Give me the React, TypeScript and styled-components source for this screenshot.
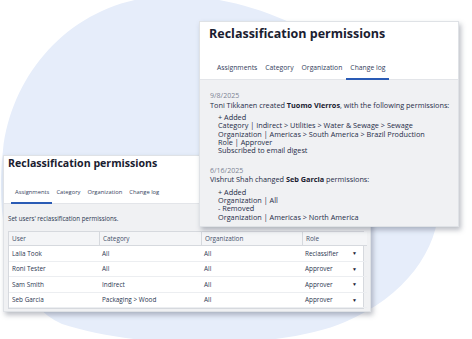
import React from "react";
import styled, { createGlobalStyle } from "styled-components";

const Global = createGlobalStyle`
  html, body { margin: 0; padding: 0; background: #ffffff; }
  body { font-family: "Open Sans", "Liberation Sans", sans-serif; }
  * { box-sizing: border-box; }
`;

const Stage = styled.div`
  position: relative;
  width: 472px;
  height: 339px;
  overflow: hidden;
  background: #ffffff;
`;

const Blob = styled.svg`
  position: absolute;
  left: 0;
  top: 0;
`;

const Card = styled.div<{ $x: number; $y: number; $w: number; $h: number }>`
  position: absolute;
  left: ${(p) => p.$x}px;
  top: ${(p) => p.$y}px;
  width: ${(p) => p.$w}px;
  height: ${(p) => p.$h}px;
  display: flex;
  flex-direction: column;
  background: #f0f1f3;
  border: 1px solid #dfe2e6;
  box-shadow: 2px 3px 5px rgba(60, 70, 90, 0.35);
`;

const Header = styled.div<{ $h: number; $pad: number }>`
  height: ${(p) => p.$h}px;
  flex: none;
  background: #ffffff;
  display: flex;
  flex-direction: column;
  padding-left: ${(p) => p.$pad}px;
  border-bottom: 1px solid #e3e5e9;
`;

const Title = styled.h1<{ $size: number; $top: number }>`
  margin: ${(p) => p.$top}px 0 0 0;
  font-size: ${(p) => p.$size}px;
  line-height: 1.2;
  font-weight: 700;
  color: #1a2030;
  white-space: nowrap;
`;

const Tabs = styled.div<{ $gap: number; $pad: number }>`
  margin-top: auto;
  display: flex;
  gap: ${(p) => p.$gap}px;
  padding-left: ${(p) => p.$pad}px;
`;

const Tab = styled.div<{ $size: number; $active?: boolean; $h: number }>`
  position: relative;
  font-size: ${(p) => p.$size}px;
  line-height: 1.35;
  color: #34415c;
  height: ${(p) => p.$h}px;
  display: flex;
  align-items: flex-start;
  white-space: nowrap;
  &::after {
    content: "";
    display: ${(p) => (p.$active ? "block" : "none")};
    position: absolute;
    left: -4px;
    right: -3px;
    bottom: -1px;
    height: 2px;
    background: #2a5bb5;
  }
`;

const LogBody = styled.div`
  padding: 12px 10px 0 10px;
  display: flex;
  flex-direction: column;
  gap: 12px;
  font-size: 7.3px;
  line-height: 8.3px;
  color: #1f2c48;
`;

const Entry = styled.div`
  display: flex;
  flex-direction: column;
`;

const DateLine = styled.div`
  color: #7d8494;
  font-size: 7px;
  margin-bottom: 0.5px;
`;

const Summary = styled.div`
  white-space: nowrap;
  margin-bottom: 4px;
  b { font-weight: 700; color: #1a2030; }
`;

const Change = styled.div`
  padding-left: 8px;
  white-space: nowrap;
`;

const AssignBody = styled.div`
  padding: 10px 6px 0 4px;
  display: flex;
  flex-direction: column;
  gap: 8px;
`;

const Intro = styled.div`
  font-size: 6.2px;
  color: #2a3650;
`;

const Table = styled.div`
  display: grid;
  grid-template-columns: 90px 102px 101px 65px;
  background: #ffffff;
  border: 1px solid #d6d9de;
  font-size: 6.4px;
  color: #2a3650;
`;

const HeadCell = styled.div`
  height: 14px;
  display: flex;
  align-items: center;
  padding-left: 3px;
  background: #f4f5f7;
  color: #44506a;
  border-left: 1px solid #d6d9de;
  border-bottom: 1px solid #d6d9de;
  &:first-child { border-left: none; }
`;

const Cell = styled.div`
  height: 15.5px;
  display: flex;
  align-items: center;
  justify-content: space-between;
  padding: 0 10px 0 3px;
  border-bottom: 1px solid #eceef1;
  white-space: nowrap;
`;

const Caret = styled.span`
  font-size: 5px;
  color: #1a2030;
`;

const rows = [
  ["Lalia Took", "All", "All", "Reclassifier"],
  ["Roni Tester", "All", "All", "Approver"],
  ["Sam Smith", "Indirect", "All", "Approver"],
  ["Seb Garcia", "Packaging > Wood", "All", "Approver"],
];

export default function App() {
  return (
    <Stage>
      <Global />
      <Blob width="472" height="339" viewBox="0 0 472 339">
        <path
          d="M 165 -4 C 270 -8 390 60 432 165 C 455 225 420 290 345 322 C 285 348 150 352 62 324 C 15 303 -6 230 3 150 C 12 70 75 0 165 -4 Z"
          fill="#e6edfa"
        />
      </Blob>

      <Card $x={3} $y={155} $w={368} $h={157}>
        <Header $h={48} $pad={4}>
          <Title $size={10.6} $top={1}>Reclassification permissions</Title>
          <Tabs $gap={7} $pad={7}>
            <Tab $size={5.8} $h={14} $active>Assignments</Tab>
            <Tab $size={5.8} $h={14}>Category</Tab>
            <Tab $size={5.8} $h={14}>Organization</Tab>
            <Tab $size={5.8} $h={14}>Change log</Tab>
          </Tabs>
        </Header>
        <AssignBody>
          <Intro>Set users' reclassification permissions.</Intro>
          <Table>
            <HeadCell>User</HeadCell>
            <HeadCell>Category</HeadCell>
            <HeadCell>Organization</HeadCell>
            <HeadCell>Role</HeadCell>
            {rows.map((r) => (
              <React.Fragment key={r[0]}>
                <Cell>{r[0]}</Cell>
                <Cell>{r[1]}</Cell>
                <Cell>{r[2]}</Cell>
                <Cell>
                  {r[3]}
                  <Caret>▼</Caret>
                </Cell>
              </React.Fragment>
            ))}
          </Table>
        </AssignBody>
      </Card>

      <Card $x={199} $y={21} $w={260} $h={206}>
        <Header $h={58} $pad={9}>
          <Title $size={12.5} $top={4}>Reclassification permissions</Title>
          <Tabs $gap={8} $pad={8}>
            <Tab $size={6.8} $h={16}>Assignments</Tab>
            <Tab $size={6.8} $h={16}>Category</Tab>
            <Tab $size={6.8} $h={16}>Organization</Tab>
            <Tab $size={6.8} $h={16} $active>Change log</Tab>
          </Tabs>
        </Header>
        <LogBody>
          <Entry>
            <DateLine>9/8/2025</DateLine>
            <Summary>
              Toni Tikkanen created <b>Tuomo Vierros</b>, with the following permissions:
            </Summary>
            <Change>+ Added</Change>
            <Change>Category | Indirect &gt; Utilities &gt; Water &amp; Sewage &gt; Sewage</Change>
            <Change>Organization | Americas &gt; South America &gt; Brazil Production</Change>
            <Change>Role | Approver</Change>
            <Change>Subscribed to email digest</Change>
          </Entry>
          <Entry>
            <DateLine>6/16/2025</DateLine>
            <Summary>
              Vishrut Shah changed <b>Seb Garcia</b> permissions:
            </Summary>
            <Change>+ Added</Change>
            <Change>Organization | All</Change>
            <Change>- Removed</Change>
            <Change>Organization | Americas &gt; North America</Change>
          </Entry>
        </LogBody>
      </Card>
    </Stage>
  );
}
